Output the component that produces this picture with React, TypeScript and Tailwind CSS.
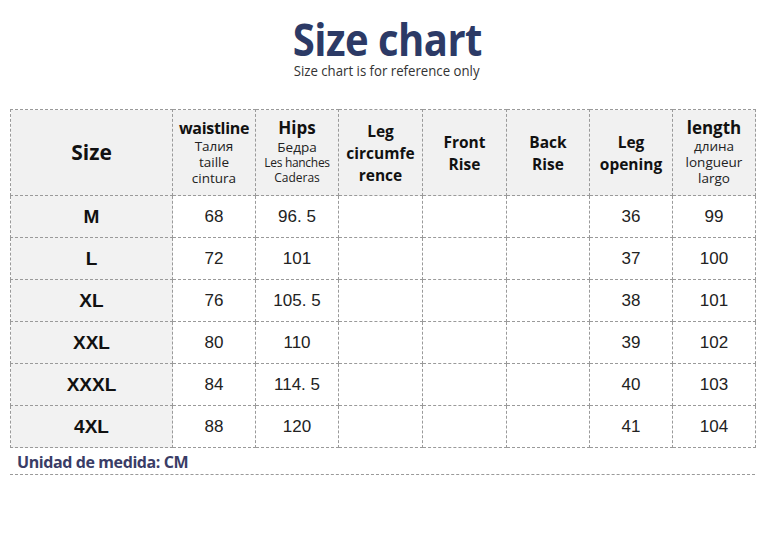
import React from "react";

type Row = {
  size: string;
  waist: string;
  hips: string;
  leg: string;
  length: string;
};

const rows: Row[] = [
  { size: "M", waist: "68", hips: "96. 5", leg: "36", length: "99" },
  { size: "L", waist: "72", hips: "101", leg: "37", length: "100" },
  { size: "XL", waist: "76", hips: "105. 5", leg: "38", length: "101" },
  { size: "XXL", waist: "80", hips: "110", leg: "39", length: "102" },
  { size: "XXXL", waist: "84", hips: "114. 5", leg: "40", length: "103" },
  { size: "4XL", waist: "88", hips: "120", leg: "41", length: "104" },
];

const cell = "border border-dashed border-[#9a9a9a] text-center align-middle p-0";
const head = `${cell} bg-[#f1f1f1] text-[#111] font-['Open_Sans',sans-serif]`;
const body = `${cell} bg-white text-[17px] text-[#222] font-['Liberation_Sans',Arial,sans-serif]`;
const sub = "text-[13.5px] leading-[16px] font-normal text-[#222]";

export default function App() {
  return (
    <div className="w-[774px] h-[546px] bg-white overflow-hidden">
      <div className="flex flex-col items-center pt-[17px]">
        <h1 className="text-[45px] leading-[44px] font-bold text-[#2c3a66] font-['Open_Sans',sans-serif] tracking-[-0.6px] scale-x-[0.89]">
          Size chart
        </h1>
        <p className="text-[15px] leading-[18px] text-[#333] font-['Open_Sans',sans-serif] scale-x-[0.88]">
          Size chart is for reference only
        </p>
      </div>

      <div className="px-[10px] mt-[30px] w-[765px]">
        <table className="w-[745px] border-collapse table-fixed">
          <colgroup>
            <col className="w-[162px]" />
            <col className="w-[83px]" />
            <col className="w-[83px]" />
            <col className="w-[84px]" />
            <col className="w-[84px]" />
            <col className="w-[83px]" />
            <col className="w-[83px]" />
            <col className="w-[83px]" />
          </colgroup>
          <thead>
            <tr className="h-[86px]">
              <th className={`${head} text-[21px] font-bold`}>Size</th>
              <th className={head}>
                <div className="text-[16px] leading-[20px] font-bold tracking-[-0.3px]">waistline</div>
                <div className={sub}>Талия</div>
                <div className={sub}>taille</div>
                <div className={`${sub} pb-[1px]`}>cintura</div>
              </th>
              <th className={head}>
                <div className="text-[17px] leading-[22px] font-bold">Hips</div>
                <div className={sub}>Бедра</div>
                <div className="text-[12px] leading-[15px] font-normal text-[#222] tracking-[-0.3px]">Les hanches</div>
                <div className="text-[12px] leading-[15px] font-normal text-[#222] pb-[3px]">Caderas</div>
              </th>
              <th className={`${head} text-[15.5px] leading-[22px] font-bold`}>
                Leg
                <br />
                circumfe
                <br />
                rence
              </th>
              <th className={`${head} text-[15.5px] leading-[22px] font-bold`}>
                Front
                <br />
                Rise
              </th>
              <th className={`${head} text-[15.5px] leading-[22px] font-bold`}>
                Back
                <br />
                Rise
              </th>
              <th className={`${head} text-[15.5px] leading-[22px] font-bold`}>
                Leg
                <br />
                opening
              </th>
              <th className={head}>
                <div className="text-[17px] leading-[21px] font-bold">length</div>
                <div className={sub}>длина</div>
                <div className={sub}>longueur</div>
                <div className={`${sub} pb-[2px]`}>largo</div>
              </th>
            </tr>
          </thead>
          <tbody>
            {rows.map((r) => (
              <tr key={r.size} className="h-[42px]">
                <td className={`${cell} bg-[#f2f2f2] text-[19px] font-bold text-[#111] font-['Liberation_Sans',Arial,sans-serif] pt-[2px]`}>
                  {r.size}
                </td>
                <td className={body}>{r.waist}</td>
                <td className={body}>{r.hips}</td>
                <td className={body}></td>
                <td className={body}></td>
                <td className={body}></td>
                <td className={body}>{r.leg}</td>
                <td className={body}>{r.length}</td>
              </tr>
            ))}
          </tbody>
        </table>

        <div className="border-b border-dashed border-[#9a9a9a] pl-[7px] pt-[2px] pb-[0px]">
          <span className="text-[16px] leading-[20px] font-bold text-[#3a3d66] font-['Open_Sans',sans-serif] tracking-[-0.4px]">
            Unidad de medida: CM
          </span>
        </div>
      </div>
    </div>
  );
}
